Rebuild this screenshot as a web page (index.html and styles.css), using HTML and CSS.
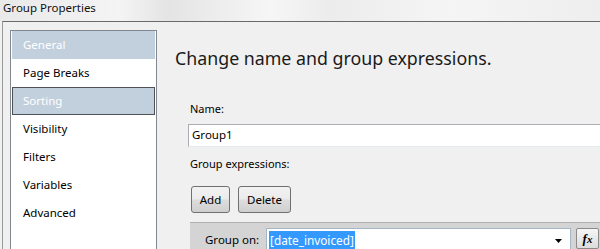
FILE: index.html
```html
<!DOCTYPE html>
<html>
<head>
<meta charset="utf-8">
<link rel="stylesheet" href="styles.css">
</head>
<body>
<div class="titlebar"><span class="title">Group Properties</span></div>
<div class="window">
  <div class="nav">
    <div class="nav-item active">General</div>
    <div class="nav-item">Page Breaks</div>
    <div class="nav-item active selected">Sorting</div>
    <div class="nav-item">Visibility</div>
    <div class="nav-item">Filters</div>
    <div class="nav-item">Variables</div>
    <div class="nav-item">Advanced</div>
  </div>
  <div class="content">
    <h1 class="heading">Change name and group expressions.</h1>
    <div class="section">
      <div class="label">Name:</div>
      <div class="textbox">Group1</div>
      <div class="label label-expr">Group expressions:</div>
      <div class="buttons">
        <button class="btn btn-add">Add</button>
        <button class="btn btn-delete">Delete</button>
      </div>
      <div class="grid">
        <div class="grid-row">
          <span class="grid-label">Group on:</span>
          <div class="combo">
            <span class="sel">[date_invoiced]</span>
            <svg class="arrow" width="7" height="4" viewBox="0 0 7 4"><path d="M0 0H7L3.5 4Z" fill="#000"/></svg>
          </div>
          <button class="fx"><i>f</i><i class="x">x</i></button>
        </div>
      </div>
    </div>
  </div>
</div>
</body>
</html>
```
FILE: styles.css
```css
html, body {
  margin: 0;
  padding: 0;
}
body {
  width: 600px;
  height: 249px;
  overflow: hidden;
  background: #f0f0f0;
  font-family: "Noto Sans", "Open Sans", sans-serif;
  font-size: 11px;
  color: #000;
}
.titlebar {
  height: 21px;
  background: linear-gradient(90deg, #e9e9e9 0%, #f4f4f4 20%, #e4e4e4 28%, #f6f6f6 45%, #ececec 55%, #f5f5f5 75%, #eeeeee 100%);
  display: flex;
  align-items: center;
}
.title {
  margin-left: 3px;
  margin-top: -6px;
  font-size: 11.5px;
  color: #111;
}
.window {
  border-top: 1px solid #6a6a6a;
  border-left: 1px solid #9a9a9a;
  margin-left: 2px;
  display: flex;
  height: 227px;
  overflow: hidden;
  background: #f0f0f0;
}
.nav {
  margin-top: 8px;
  margin-left: 7px;
  width: 143px;
  border: 1px solid #828790;
  border-bottom: none;
  background: #fff;
  padding: 0 1px;
  flex: none;
}
.nav-item {
  height: 28px;
  line-height: 27px;
  padding-left: 11px;
  font-size: 11.5px;
  color: #000;
  box-sizing: border-box;
}
.nav-item.active {
  background: #c2d0dd;
  color: #fff;
}
.nav-item.selected {
  border: 1px solid #4e5257;
  padding-left: 10px;
  line-height: 25px;
}
.content {
  flex: 1;
  padding-left: 18px;
  min-width: 0;
}
.heading {
  margin: 23px 0 0 0;
  font-weight: normal;
  font-size: 17.8px;
  line-height: 26px;
  color: #1a1a1a;
  white-space: nowrap;
}
.section {
  padding-left: 13px;
}
.label {
  margin-top: 30px;
  margin-left: 2px;
  line-height: 16px;
  height: 16px;
}
.textbox {
  margin-top: 7px;
  height: 23px;
  box-sizing: border-box;
  border: 1px solid #abadb3;
  border-bottom-color: #e3e9ef;
  border-right: none;
  background: #fff;
  line-height: 20px;
  padding-left: 3px;
  margin-right: -10px;
  font-size: 11.5px;
}
.label-expr {
  margin-top: 9px;
}
.buttons {
  display: flex;
  gap: 8px;
  margin-top: 14px;
  margin-left: 3px;
}
.btn {
  height: 27px;
  box-sizing: border-box;
  border: 1px solid #707070;
  border-radius: 3px;
  background: linear-gradient(#f2f2f2 0%, #ebebeb 48%, #dddddd 52%, #cfcfcf 100%);
  font-family: inherit;
  font-size: 11.5px;
  padding: 0;
  color: #000;
}
.btn-add { width: 39px; }
.btn-delete { width: 53px; }
.grid {
  margin-top: 9px;
  margin-left: 2px;
  margin-right: -10px;
  background: #d4d4d4;
  border-top: 1px solid #b0b0b0;
  height: 40px;
}
.grid-row {
  display: flex;
  align-items: flex-start;
  padding-top: 5px;
}
.grid-label {
  width: 61px;
  padding-left: 15px;
  line-height: 22px;
  margin-top: 1px;
  flex: none;
  font-size: 11.5px;
}
.combo {
  width: 305px;
  height: 24px;
  box-sizing: border-box;
  background: #fff;
  border: 1px solid #a5b6c8;
  border-bottom: none;
  display: flex;
  align-items: center;
  padding-left: 2px;
  flex: none;
}
.sel {
  background: #3399ff;
  color: #fff;
  line-height: 19px;
  padding: 0 1px;
  font-size: 11.8px;
}
.arrow {
  margin-left: auto;
  margin-right: 8px;
}
.fx {
  margin-left: 5px;
  width: 23px;
  height: 21px;
  box-sizing: border-box;
  border: 1px solid #8a8a8a;
  border-radius: 2px;
  background: linear-gradient(#f6f6f6, #dcdcdc);
  padding: 0;
  font-family: "Liberation Serif", serif;
  font-weight: bold;
  font-size: 13px;
  color: #000;
  flex: none;
}
.fx .x { font-size: 11px; }
```
